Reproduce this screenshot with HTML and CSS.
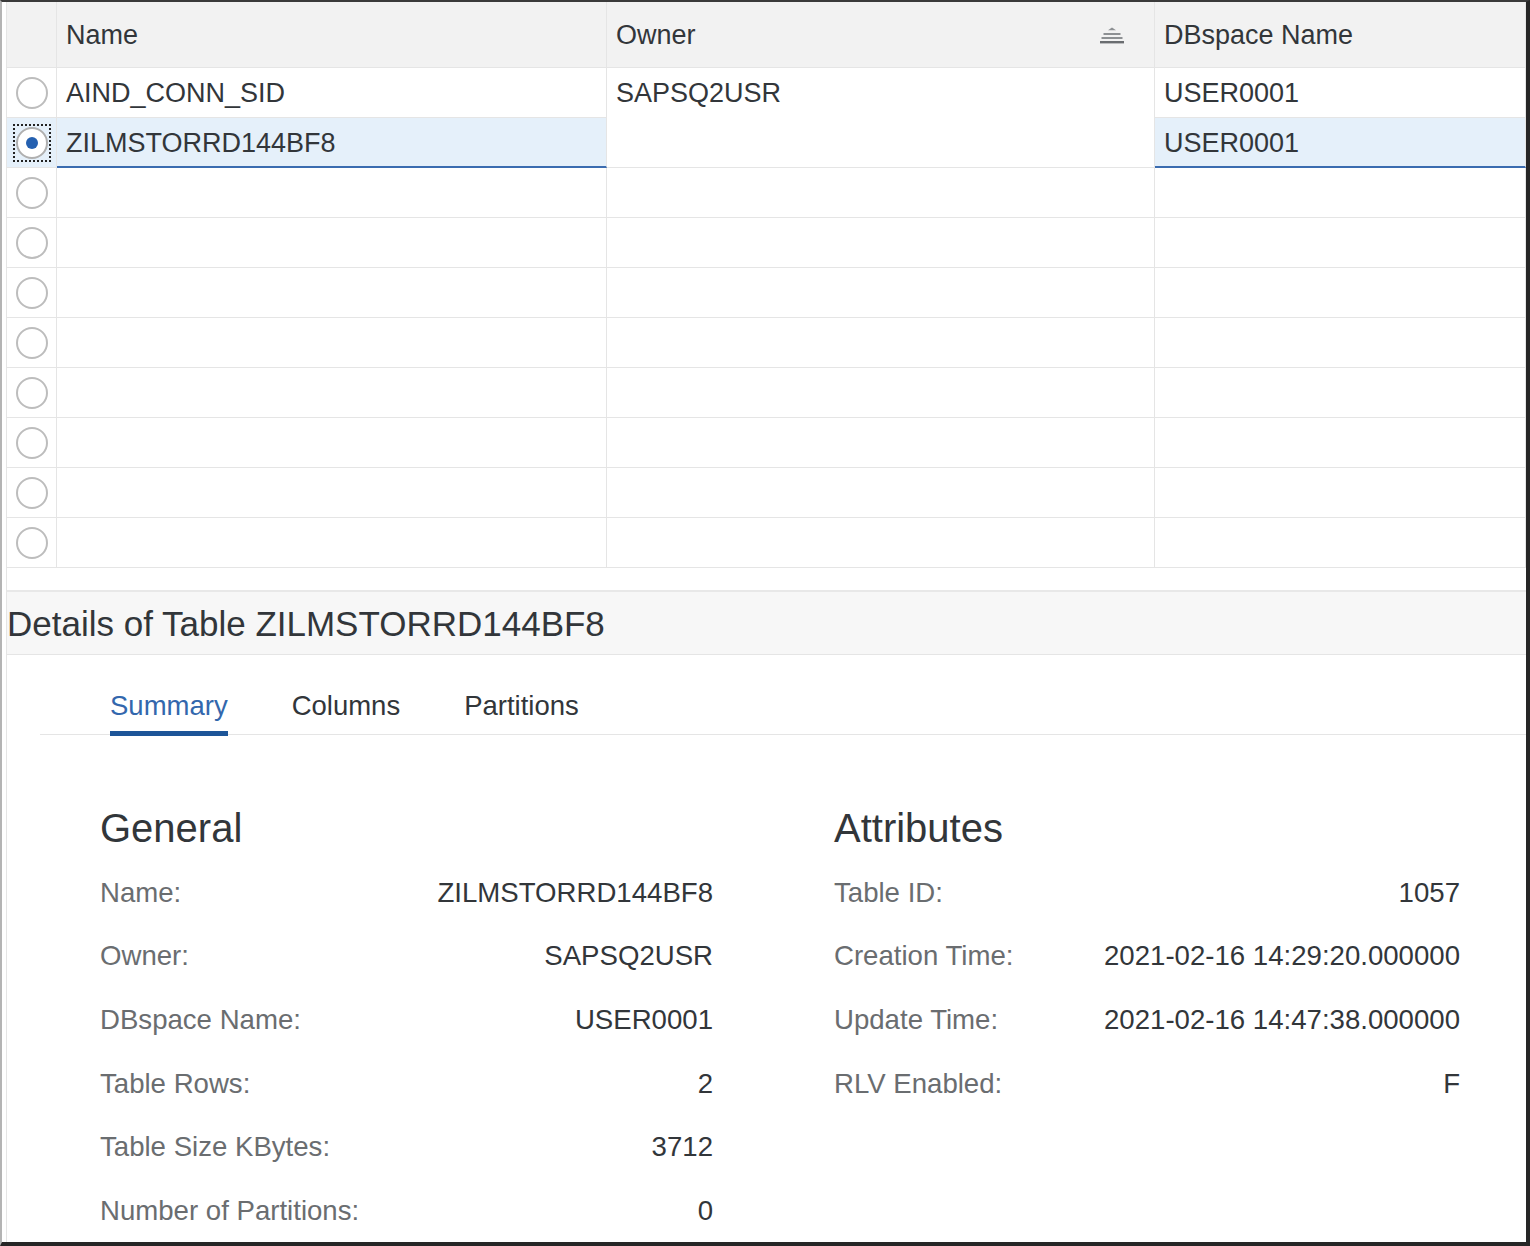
FILE: index.html
```html
<!DOCTYPE html>
<html lang="en">
<head>
<meta charset="utf-8">
<title>Tables</title>
<link rel="stylesheet" href="styles.css">
</head>
<body>
<div class="frame">
  <div class="main">
    <div class="grid">
      <div class="hd sel"></div>
      <div class="hd">Name</div>
      <div class="hd owner-hd"><span>Owner</span>
        <svg class="sort" width="24" height="17" viewBox="0 0 24 17"><path d="M8 3.2 L12 0.4 L16 3.2 Z" fill="#8d9093"/><rect x="3.5" y="6" width="17" height="2" fill="#8d9093"/><rect x="1.5" y="10" width="21" height="2" fill="#8d9093"/><rect x="0" y="14" width="24" height="2.4" fill="#6a6d70"/></svg>
      </div>
      <div class="hd">DBspace Name</div>

      <div class="c sel"><span class="radio"></span></div>
      <div class="c">AIND_CONN_SID</div>
      <div class="c span2">SAPSQ2USR</div>
      <div class="c">USER0001</div>

      <div class="c sel on"><span class="focus"><span class="radio checked"></span></span></div>
      <div class="c on txt">ZILMSTORRD144BF8</div>
      <div class="c on txt">USER0001</div>

      <div class="c sel"><span class="radio"></span></div><div class="c"></div><div class="c"></div><div class="c"></div>
      <div class="c sel"><span class="radio"></span></div><div class="c"></div><div class="c"></div><div class="c"></div>
      <div class="c sel"><span class="radio"></span></div><div class="c"></div><div class="c"></div><div class="c"></div>
      <div class="c sel"><span class="radio"></span></div><div class="c"></div><div class="c"></div><div class="c"></div>
      <div class="c sel"><span class="radio"></span></div><div class="c"></div><div class="c"></div><div class="c"></div>
      <div class="c sel"><span class="radio"></span></div><div class="c"></div><div class="c"></div><div class="c"></div>
      <div class="c sel"><span class="radio"></span></div><div class="c"></div><div class="c"></div><div class="c"></div>
      <div class="c sel"><span class="radio"></span></div><div class="c"></div><div class="c"></div><div class="c"></div>
    </div>
    <div class="tfoot"></div>
    <div class="dhead">Details of Table ZILMSTORRD144BF8</div>
    <div class="tabs">
      <div class="tab active">Summary</div>
      <div class="tab">Columns</div>
      <div class="tab">Partitions</div>
    </div>
    <div class="form">
      <div class="group">
        <h2>General</h2>
        <div class="row"><span class="lbl">Name:</span><span class="val">ZILMSTORRD144BF8</span></div>
        <div class="row"><span class="lbl">Owner:</span><span class="val">SAPSQ2USR</span></div>
        <div class="row"><span class="lbl">DBspace Name:</span><span class="val">USER0001</span></div>
        <div class="row"><span class="lbl">Table Rows:</span><span class="val">2</span></div>
        <div class="row"><span class="lbl">Table Size KBytes:</span><span class="val">3712</span></div>
        <div class="row"><span class="lbl">Number of Partitions:</span><span class="val">0</span></div>
      </div>
      <div class="group">
        <h2>Attributes</h2>
        <div class="row"><span class="lbl">Table ID:</span><span class="val">1057</span></div>
        <div class="row"><span class="lbl">Creation Time:</span><span class="val">2021-02-16 14:29:20.000000</span></div>
        <div class="row"><span class="lbl">Update Time:</span><span class="val">2021-02-16 14:47:38.000000</span></div>
        <div class="row"><span class="lbl">RLV Enabled:</span><span class="val">F</span></div>
      </div>
    </div>
  </div>
</div>
</body>
</html>
```
FILE: styles.css
```css
html, body {
  margin: 0;
  padding: 0;
  background: #fff;
}
body {
  font-family: "Liberation Sans", Arial, sans-serif;
  color: #32363a;
}
.frame {
  width: 1530px;
  height: 1246px;
  box-sizing: border-box;
  border-top: 2px solid #3a3a3a;
  border-left: 2px solid #b4b4b4;
  border-right: 4px solid #262626;
  border-bottom: 4px solid #262626;
  background: #fff;
  overflow: hidden;
}
.main {
  margin-left: 4px;
  border-left: 1px solid #e5e5e5;
  height: 100%;
}
.grid {
  display: grid;
  grid-template-columns: 50px 550px 548px 1fr;
  grid-template-rows: 66px;
  grid-auto-rows: 50px;
  font-size: 27px;
}
.hd {
  background: #f2f2f2;
  border-right: 1px solid #e5e5e5;
  border-bottom: 1px solid #e5e5e5;
  box-sizing: border-box;
  padding: 2px 0 0 9px;
  display: flex;
  align-items: center;
}
.owner-hd {
  justify-content: space-between;
  padding-right: 30px;
}
.sort {
  display: block;
  margin-top: -1px;
}
.c {
  border-right: 1px solid #e5e5e5;
  border-bottom: 1px solid #e5e5e5;
  box-sizing: border-box;
  padding: 2px 0 0 9px;
  line-height: 47px;
  white-space: nowrap;
}
.span2 {
  grid-row: span 2;
  line-height: 47px;
}
.sel {
  padding: 0;
  display: flex;
  justify-content: center;
  align-items: center;
}
.on {
  background: #e5f0fa;
}
.on.txt {
  border-bottom: 2px solid #3b6cb0;
  line-height: 46px;
}
.radio {
  width: 32px;
  height: 32px;
  box-sizing: border-box;
  border: 2px solid #bdbdbd;
  border-radius: 50%;
  background: #fff;
  display: flex;
  align-items: center;
  justify-content: center;
}
.focus {
  display: flex;
  border: 2px dotted #222;
  padding: 1px;
}
.radio.checked {
  border-color: #b0b0b0;
}
.radio.checked::after {
  content: "";
  width: 12px;
  height: 12px;
  border-radius: 50%;
  background: #2460b0;
}
.tfoot {
  height: 22px;
  border-bottom: 2px solid #e8e8e8;
}
.dhead {
  height: 63px;
  box-sizing: border-box;
  background: #f7f7f7;
  border-bottom: 1px solid #e5e5e5;
  font-size: 35px;
  display: flex;
  align-items: center;
  white-space: nowrap;
  padding-top: 2px;
}
.tabs {
  margin-left: 33px;
  padding-left: 70px;
  padding-top: 32px;
  display: flex;
  gap: 64px;
  border-bottom: 1px solid #e5e5e5;
  align-items: flex-start;
}
.tab {
  font-size: 27.5px;
  line-height: 38px;
  padding-bottom: 6px;
  border-bottom: 5px solid transparent;
  margin-bottom: -2px;
  color: #32363a;
}
.tab.active {
  color: #3367ad;
  border-bottom-color: #1d5598;
}
.form {
  padding: 70px 0 0 93px;
  display: grid;
  grid-template-columns: 613px 626px;
  column-gap: 121px;
}
.group h2 {
  font-size: 40px;
  font-weight: normal;
  line-height: 46px;
  margin: 0 0 10px;
  color: #32363a;
}
.row {
  display: flex;
  justify-content: space-between;
  align-items: center;
  height: 63.6px;
  font-size: 27.6px;
  white-space: nowrap;
}
.lbl {
  color: #6a6d70;
}
.val {
  color: #32363a;
}
```
